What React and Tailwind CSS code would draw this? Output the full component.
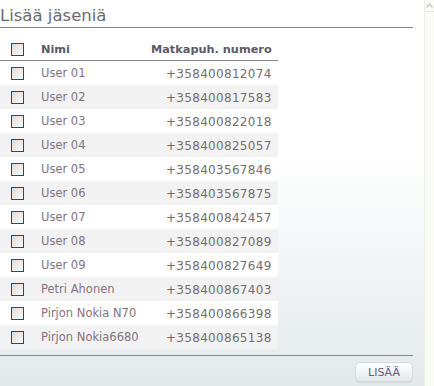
import React from "react";

const rows = [
  ["User 01", "+358400812074"],
  ["User 02", "+358400817583"],
  ["User 03", "+358400822018"],
  ["User 04", "+358400825057"],
  ["User 05", "+358403567846"],
  ["User 06", "+358403567875"],
  ["User 07", "+358400842457"],
  ["User 08", "+358400827089"],
  ["User 09", "+358400827649"],
  ["Petri Ahonen", "+358400867403"],
  ["Pirjon Nokia N70", "+358400866398"],
  ["Pirjon Nokia6680", "+358400865138"],
];

function Box() {
  return (
    <span className="block w-[13px] h-[13px] border border-[#284a70] bg-gradient-to-br from-[#dcdcd6] to-[#fbfbf8]" />
  );
}

export default function App() {
  return (
    <div className="flex w-[434px] h-[386px] overflow-hidden font-['DejaVu_Sans',Verdana,sans-serif]">
      <div className="w-[424px] h-full flex flex-col bg-gradient-to-b from-white from-40% to-[#e3e9eb]">
        <div className="pt-[5px] w-[413px] border-b border-[#8a8a8a] h-[28px]">
          <div className="text-[16.5px] leading-[22px] text-[#6c6c6c] pl-0">Lisää jäseniä</div>
        </div>
        <div className="mt-[15px] w-[278px] flex items-center h-[18px] border-b border-[#8a8a8a]">
          <div className="w-[41px] pl-[11px] pb-[4px]"><Box /></div>
          <div className="w-[110px] text-[11.3px] font-bold text-[#5a5a66] pb-[3px]">Nimi</div>
          <div className="text-[11.3px] font-bold text-[#5a5a66] pb-[3px]">Matkapuh. numero</div>
        </div>
        <div className="w-[278px] flex flex-col">
          {rows.map((r, i) => (
            <div
              key={i}
              className={
                "flex items-center h-[24px] " + (i % 2 === 1 ? "bg-[#f2f2f2]" : "bg-white")
              }
            >
              <div className="w-[41px] pl-[11px]"><Box /></div>
              <div className="w-[125px] text-[11.5px] text-[#84727f] pt-[2px]">{r[0]}</div>
              <div className="text-[12px] tracking-[0.3px] text-[#707070] pt-[2px]">{r[1]}</div>
            </div>
          ))}
        </div>
        <div className="mt-[6px] w-[413px] border-t border-[#8a8a8a]" />
        <div className="w-[413px] flex justify-end pt-[6px]">
          <button className="w-[58px] h-[20px] rounded-[5px] border border-[#d4dadd] bg-gradient-to-b from-white to-[#e2e8eb] text-[11px] text-[#6a5a78] leading-none shadow-[0_1px_1px_rgba(0,0,0,0.08)]">
            LISÄÄ
          </button>
        </div>
      </div>
      <div className="w-[10px] h-full bg-[#fbfbf5] border-l border-[#eeeee6] flex flex-col">
        <div className="h-[12px] border-b border-[#e6e6dc] flex items-center justify-center text-[#c8c8c0]">
          <svg width="7" height="5" viewBox="0 0 7 5"><path d="M0.5 4.5 L3.5 1 L6.5 4.5" fill="none" stroke="#c8c8c0" strokeWidth="1.2"/></svg>
        </div>
      </div>
    </div>
  );
}
